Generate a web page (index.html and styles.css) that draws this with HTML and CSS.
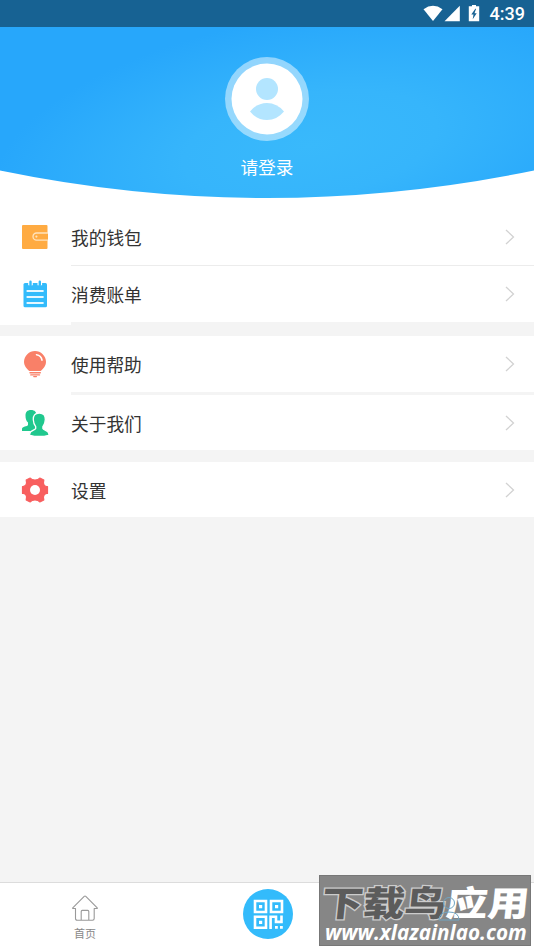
FILE: index.html
```
<!DOCTYPE html>
<html lang="zh-CN">
  <head>
    <meta charset="utf-8">
    <title>我的</title>
    <link rel="stylesheet" href="styles.css">
  </head>
  <body>
    <div class="statusbar">
      <svg class="status-icons" width="60" height="18" viewBox="0 0 60 18">
        <path d="M0.5 4.2Q10 -2.6 19.5 4.2L10 16z" fill="#fff"/>
        <path d="M21.5 16.3L36.8 0.8V16.3z" fill="#fff"/>
        <path d="M49 0h4v1.2h3.2V16.3h-10.4V1.2H49z" fill="#fff"/>
        <path d="M52.3 3.8L48.3 9.5h2.2l-.8 4.7 4-6h-2.2l1.6-4.4z" fill="#176293"/>
      </svg>
      <span class="clock">4:39</span>
    </div>

    <div class="header">
      <svg class="header-bg" width="534" height="172" viewBox="0 0 534 172">
        <defs>
          <radialGradient id="glow" gradientUnits="userSpaceOnUse" cx="0" cy="0" r="1" gradientTransform="translate(310 118) rotate(-9) scale(320 130)">
            <stop offset="0" stop-color="#39b9fb"/>
            <stop offset="0.4" stop-color="#36b5fb"/>
            <stop offset="1" stop-color="#27a7fb"/>
          </radialGradient>
        </defs>
        <path d="M0 0H534V143.5Q267 198.5 0 143.5z" fill="url(#glow)"/>
      </svg>
      <div class="profile">
        <svg class="avatar" width="84" height="84" viewBox="0 0 84 84">
          <circle cx="42" cy="42" r="42" fill="#fff" opacity="0.48"/>
          <circle cx="42" cy="42" r="35.5" fill="#fff"/>
          <circle cx="42" cy="32" r="11" fill="#b3e5ff"/>
          <path d="M25 54.5Q32 46 42 46T59 54.5Q52 63 42 63T25 54.5z" fill="#b3e5ff"/>
        </svg>
        <span class="login">请登录</span>
      </div>
    </div>

    <!-- Menu -->
    <div class="menu">
      <div class="item wallet">
        <svg class="icon" width="28" height="28" viewBox="0 0 28 28">
          <rect x="1" y="2" width="25.5" height="24" rx="1" fill="#ffab42"/>
          <path d="M27 10H15.6a3.6 3.6 0 0 0 0 7.2H27" fill="#ffab42" stroke="#ffe3bd" stroke-width="1.3"/>
          <circle cx="15.4" cy="13.6" r="1.1" fill="#ffe3bd"/>
        </svg>
        <span class="label">我的钱包</span>
        <svg class="arrow" width="10" height="16" viewBox="0 0 10 16"><path d="M1 1L8.5 8 1 15"/></svg>
      </div>
      <div class="line"></div>
      <div class="item bill">
        <svg class="icon" width="28" height="28" viewBox="0 0 28 28">
          <rect x="2.5" y="3" width="23.5" height="24.2" rx="1.5" fill="#33bbfb"/>
          <path d="M9.5 .5V5.2M18.8 .5V5.2" stroke="#fff" stroke-width="4.6"/>
          <path d="M9.5 1.8V4.8M18.8 1.8V4.8" stroke="#33bbfb" stroke-width="2.4" stroke-linecap="round"/>
          <path d="M5.6 11h17M5.6 17h17M5.6 23h17" stroke="#e5f7ff" stroke-width="2.2"/>
        </svg>
        <span class="label">消费账单</span>
        <svg class="arrow" width="10" height="16" viewBox="0 0 10 16"><path d="M1 1L8.5 8 1 15"/></svg>
      </div>
      <div class="gap gap-first"></div>
      <div class="item help">
        <svg class="icon" width="28" height="28" viewBox="0 0 28 28">
          <path d="M14 1a11 11 0 0 1 11 10.8c0 4.5-3 7.2-5.3 9.2H8.300C6 19 3 16.300 3 11.800A11 11 0 0 1 14 1z" fill="#f98068"/>
          <path d="M15.5 4.7q4.800.6 5.500 5.500" fill="none" stroke="#fff" stroke-width="1.6" stroke-linecap="round"/>
          <path d="M9 22.800h10.300M9.800 24.900h8.700M12.800 26.600h2.600" stroke="#f98068" stroke-width="1.4" stroke-linecap="round"/>
        </svg>
        <span class="label">使用帮助</span>
        <svg class="arrow" width="10" height="16" viewBox="0 0 10 16"><path d="M1 1L8.5 8 1 15"/></svg>
      </div>
      <div class="line thick"></div>
      <div class="item about">
        <svg class="icon" width="28" height="28" viewBox="0 0 28 28">
          <path d="M10 1c3.800 0 5.500 2.200 5.500 5.500 0 3-.5 5.500-2 7v2.500l2 1-2 5H1v-2c0-2.700 5.500-2.500 6-4v-2.500C5.200 12 4.500 9.500 4.500 6.500 4.500 3.200 6.200 1 10 1z" fill="#20c88e"/>
          <path d="M18.300 4c4.500 0 6.200 2.900 6 6.800-.1 2.800-1 5.200-2.400 6.800v1.900c.8 1.800 6 1.700 6 5.600v1.200q-9.600 2.400-19.200 0v-1.200c0-3.900 5.200-3.800 6-5.600v-1.900c-1.400-1.600-2.300-4-2.400-6.800-.2-3.900 1.500-6.800 6-6.800z" fill="#20c88e" stroke="#fff" stroke-width="1.3"/>
        </svg>
        <span class="label">关于我们</span>
        <svg class="arrow" width="10" height="16" viewBox="0 0 10 16"><path d="M1 1L8.5 8 1 15"/></svg>
      </div>
      <div class="gap"></div>
      <div class="item setting">
        <svg class="icon" width="28" height="28" viewBox="0 0 28 28">
          <path d="M9.200 2Q10.500 4 14 4t4.800-2l4 2Q21.800 7.800 23.300 9.300t3.200 1.200v7q-1.700-.2-3.200 1.200t-.5 5.300l-4 2Q17.500 24 14 24t-4.800 2L5.200 24Q6.200 20.200 4.700 18.700T1.500 17.500v-7q1.700.2 3.200-1.200T5.200 4z" fill="#f85f5f" stroke="#f85f5f" stroke-width="1.2" stroke-linejoin="round"/>
          <circle cx="14" cy="14" r="5" fill="#fff"/>
        </svg>
        <span class="label">设置</span>
        <svg class="arrow" width="10" height="16" viewBox="0 0 10 16"><path d="M1 1L8.5 8 1 15"/></svg>
      </div>
    </div>

    <!-- Bottom tabs -->
    <div class="tabbar">
      <div class="tab">
        <svg width="28" height="28" viewBox="0 0 28 28" fill="none" stroke="#999" stroke-width="1.1" stroke-linejoin="round">
          <path d="M4.500 14.500H2.200Q1.200 14.500 2 13.600L13.200 2.300q.8-.7 1.600 0L26 13.600q.8.900-.2.900H23.200V24.500q0 1.700-1.700 1.700H6.200q-1.700 0-1.700-1.700z"/>
          <path d="M10.200 26V17.400q0-1 1-1h5.600q1 0 1 1V26"/>
        </svg>
        <span>首页</span>
      </div>
      <div class="tab">
        <svg width="50" height="50" viewBox="0 0 50 50">
          <circle cx="25" cy="25" r="25" fill="#33bbfb"/>
          <g fill="none" stroke="#fff" stroke-width="2.6">
            <path d="M12 12h11v11H12zM28 12h11v11H28zM12 27.700h11v11H12z"/>
            <path d="M27.600 40V27.700h5.400v5.200h5.500V26.400"/>
          </g>
          <path d="M16 16h3.200v3.200H16zM32 16h3.200v3.200H32zM16 31.700h3.200v3.200H16zM32 37h2.800v2.800H32zM37 37h2.800v2.800H37z" fill="#fff"/>
        </svg>
      </div>
    </div>

    <div class="watermark">
      <svg class="mine" width="24" height="46" viewBox="0 0 24 46" fill="none" stroke="#70a5c2" stroke-width="1">
        <circle cx="13" cy="7" r="5.5"/>
        <path d="M3 24q0-8 10-8t10 8z"/>
      </svg>
      <div class="brand"><span class="dark">下载鸟</span><span>应用</span></div>
      <div class="site">www.xlazainlao.com</div>
    </div>
  </body>
</html>
```
FILE: styles.css
```
body {
  margin: 0;
  height: 950px;
  display: flex;
  flex-direction: column;
  overflow: hidden;
  background-color: #f4f4f4;
  font-family: "Noto Sans CJK SC", sans-serif;
  color: #333;
}

svg {
  display: block;
  flex: none;
}

.statusbar {
  display: flex;
  align-items: center;
  justify-content: flex-end;
  height: 27px;
  padding-right: 9px;
  background-color: #176293;
}

.status-icons {
  margin-right: 7px;
}

.clock {
  color: #fff;
  font-family: Roboto, sans-serif;
  font-size: 18px;
  font-weight: 500;
}

/* Header */
.header {
  display: grid;
  height: 171px;
  background-color: #fff;
}

.header-bg,
.profile {
  grid-area: 1 / 1;
}

.profile {
  display: flex;
  flex-direction: column;
  align-items: center;
  padding-top: 30px;
}

.login {
  margin-top: 13px;
  color: #fff;
  font-size: 17.6px;
  line-height: 26px;
}

/* Menu */
.item {
  display: flex;
  align-items: center;
  box-sizing: border-box;
  height: 56px;
  padding: 0 19px 0 21px;
  background-color: #fff;
}

.wallet {
  height: 67px;
  padding-top: 11px;
}

.about,
.setting {
  height: 55px;
}

.icon {
  margin-right: 22px;
}

.label {
  flex: 1;
  font-size: 17.7px;
  line-height: 26px;
}

.arrow {
  fill: none;
  stroke: #d2d2d2;
  stroke-width: 1.3;
}

.line {
  height: 1px;
  border-left: 71px solid #fff;
  background-color: #ececec;
}

.thick {
  height: 3px;
  background-color: #f4f4f4;
}

.gap {
  height: 12px;
}

.gap-first {
  height: 14px;
}

/* the white under the icon column reaches a bit lower */
.gap-first::before {
  content: "";
  display: block;
  width: 71px;
  height: 3px;
  background-color: #fff;
}

/* Bottom tabs */
.tabbar {
  display: flex;
  box-sizing: border-box;
  height: 68px;
  margin-top: auto;
  border-top: 1px solid #dcdcdc;
  background-color: #fff;
}

.tab {
  flex: none;
  width: 170px;
  display: flex;
  flex-direction: column;
  align-items: center;
  padding-top: 11px;
  color: #888;
  font-size: 11px;
  line-height: 16px;
}

.tab span {
  margin-top: 3px;
}

.tab + .tab {
  width: 196px;
  padding-top: 6px;
}

.watermark {
  position: absolute;
  left: 319px;
  top: 875px;
  box-sizing: border-box;
  width: 212px;
  height: 71px;
  border: 1px solid #777;
  background-color: #868686;
  color: #fff;
  white-space: nowrap;
}

.mine {
  position: absolute;
  z-index: 1;
  left: 116px;
  top: 20px;
}

.brand {
  margin: 5px 0 0 2px;
  font-size: 41.5px;
  font-weight: 900;
  line-height: 40px;
  transform: skewX(-6deg) scaleY(0.84);
}

.dark {
  color: #5c5c5c;
  -webkit-text-stroke: 3px #ccc;
  paint-order: stroke fill;
}

.site {
  margin: 0 0 0 5px;
  font-family: "Open Sans", sans-serif;
  font-size: 20.7px;
  font-weight: 700;
  font-style: italic;
  line-height: 22px;
}
```
